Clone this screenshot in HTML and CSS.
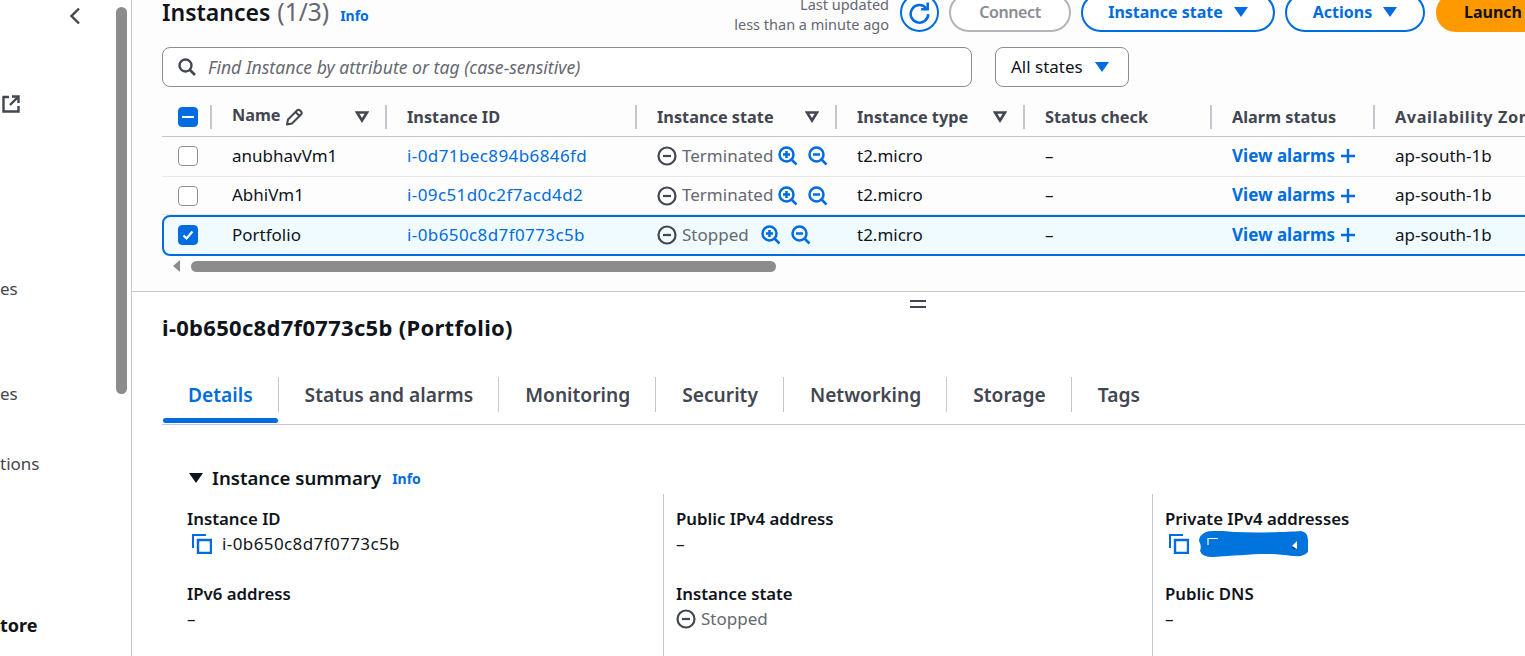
FILE: index.html
```html
<!DOCTYPE html>
<html>
<head>
	<title>Instances | EC2</title>
	<link rel="stylesheet" href="styles.css">
</head>
<body>
	<svg class="defs" width="0" height="0">
		<symbol id="stopped" viewBox="0 0 20 20"><circle cx="10" cy="10" r="8.5" fill="none" stroke="currentColor" stroke-width="2.2"/><path d="M6 10h8" stroke="currentColor" stroke-width="2.2"/></symbol>
		<symbol id="zoomin" viewBox="0 0 20 20"><circle cx="8.5" cy="8.5" r="7" fill="none" stroke="currentColor" stroke-width="2.5"/><path d="M13.5 13.5l5 5M8.5 5v7M5 8.5h7" fill="none" stroke="currentColor" stroke-width="2.5"/></symbol>
		<symbol id="zoomout" viewBox="0 0 20 20"><circle cx="8.5" cy="8.5" r="7" fill="none" stroke="currentColor" stroke-width="2.5"/><path d="M13.5 13.5l5 5M5 8.5h7" fill="none" stroke="currentColor" stroke-width="2.5"/></symbol>
		<symbol id="plus" viewBox="0 0 16 16"><path d="M8 1v14M1 8h14" stroke="currentColor" stroke-width="2.4"/></symbol>
		<symbol id="copy" viewBox="0 0 20 20"><path d="M1 14V1h13" fill="none" stroke="currentColor" stroke-width="2"/><path d="M6 6h13v13H6z" fill="none" stroke="currentColor" stroke-width="2.4"/></symbol>
		<symbol id="sort" viewBox="0 0 14 12"><path d="M2 1.500h10L7 9.500z" fill="none" stroke="currentColor" stroke-width="2.600"/></symbol>
		<symbol id="caret" viewBox="0 0 14 12"><path d="M0 1h14L7 11z" fill="currentColor"/></symbol>
	</svg>

	<aside class="sidenav">
		<div class="nav-inner">
			<svg class="nav-chevron" viewBox="0 0 12 18" width="12" height="18"><path d="M10 1.500L2.500 9l7.500 7.500" fill="none" stroke="#424650" stroke-width="2.400"/></svg>
			<svg class="nav-ext" viewBox="0 0 18 18" width="18" height="18"><path d="M7 2H1.500v14.500h15V11M10 1.500h6.500V8M16 2L8 10" fill="none" stroke="#424650" stroke-width="2.400"/></svg>
			<div class="nav-item nav-a">es</div>
			<div class="nav-item nav-b">es</div>
			<div class="nav-item nav-c">tions</div>
			<div class="nav-item nav-head">tore</div>
		</div>
		<div class="nav-scroll"></div>
	</aside>

	<main class="content">
		<section class="list-panel">
			<div class="list-head">
				<h1 class="title">Instances <span class="count">(1/3)</span> <a class="info">Info</a></h1>
				<div class="updated">Last updated<br>less than a minute ago</div>
				<button class="btn btn-icon"><svg viewBox="0 0 20 20" width="22" height="22"><path d="M15.500 5.500A8 8 0 1 0 17.500 11" fill="none" stroke="#006ce0" stroke-width="2.300"/><path d="M11 6.500h6V.5" fill="none" stroke="#006ce0" stroke-width="2.300"/></svg></button>
				<button class="btn btn-off">Connect</button>
				<button class="btn btn-state">Instance state <svg class="btn-caret"><use href="#caret"/></svg></button>
				<button class="btn btn-actions">Actions <svg class="btn-caret"><use href="#caret"/></svg></button>
				<button class="btn btn-launch">Launch</button>
			</div>

			<div class="filters">
				<div class="search">
					<svg viewBox="0 0 18 18" width="18" height="18"><circle cx="7.500" cy="7.500" r="6" fill="none" stroke="#424650" stroke-width="2.400"/><path d="M12 12l5 5" stroke="#424650" stroke-width="2.600"/></svg>
					<span>Find Instance by attribute or tag (case-sensitive)</span>
				</div>
				<div class="state-select">All states <svg class="btn-caret"><use href="#caret"/></svg></div>
			</div>

			<div class="row row-head">
				<div class="cell cell-check"><span class="check check-on"><i class="dash"></i></span></div>
				<div class="cell name-head"><span class="name-label">Name</span><svg viewBox="0 0 18 18" width="18" height="18"><path d="M2 16.500l1-5L12 2.500q1.500-1.500 3 0l1 1q1.500 1.500 0 3l-9 9z M10.500 4l4 4" fill="none" stroke="#424650" stroke-width="2" stroke-linejoin="round"/></svg><svg class="sort"><use href="#sort"/></svg></div>
				<div class="cell">Instance ID</div>
				<div class="cell">Instance state<svg class="sort"><use href="#sort"/></svg></div>
				<div class="cell">Instance type<svg class="sort"><use href="#sort"/></svg></div>
				<div class="cell">Status check</div>
				<div class="cell">Alarm status</div>
				<div class="cell cell-az">Availability Zone</div>
			</div>
			<div class="row row-first">
				<div class="cell cell-check"><span class="check"></span></div>
				<div class="cell">anubhavVm1</div>
				<div class="cell"><a class="link">i-0d71bec894b6846fd</a></div>
				<div class="cell"><span class="state"><svg><use href="#stopped"/></svg>Terminated</span><svg class="zoom first"><use href="#zoomin"/></svg><svg class="zoom"><use href="#zoomout"/></svg></div>
				<div class="cell">t2.micro</div>
				<div class="cell">–</div>
				<div class="cell"><a class="alarm">View alarms <svg><use href="#plus"/></svg></a></div>
				<div class="cell">ap-south-1b</div>
			</div>
			<div class="row row-second">
				<div class="cell cell-check"><span class="check"></span></div>
				<div class="cell">AbhiVm1</div>
				<div class="cell"><a class="link">i-09c51d0c2f7acd4d2</a></div>
				<div class="cell"><span class="state"><svg><use href="#stopped"/></svg>Terminated</span><svg class="zoom first"><use href="#zoomin"/></svg><svg class="zoom"><use href="#zoomout"/></svg></div>
				<div class="cell">t2.micro</div>
				<div class="cell">–</div>
				<div class="cell"><a class="alarm">View alarms <svg><use href="#plus"/></svg></a></div>
				<div class="cell">ap-south-1b</div>
			</div>
			<div class="row row-selected">
				<div class="cell cell-check"><span class="check check-on"><svg viewBox="0 0 14 14" width="14" height="14"><path d="M2.500 7.500l3 3 6-7" fill="none" stroke="#fff" stroke-width="2.200"/></svg></span></div>
				<div class="cell">Portfolio</div>
				<div class="cell"><a class="link">i-0b650c8d7f0773c5b</a></div>
				<div class="cell"><span class="state"><svg><use href="#stopped"/></svg>Stopped</span><svg class="zoom wide"><use href="#zoomin"/></svg><svg class="zoom"><use href="#zoomout"/></svg></div>
				<div class="cell">t2.micro</div>
				<div class="cell">–</div>
				<div class="cell"><a class="alarm">View alarms <svg><use href="#plus"/></svg></a></div>
				<div class="cell">ap-south-1b</div>
			</div>
			<div class="hscroll">
				<span class="hscroll-arrow"></span>
				<span class="hscroll-thumb"></span>
			</div>
		</section>

		<div class="splitter"><span></span></div>

		<section class="detail-panel">
			<h2 class="detail-title">i-0b650c8d7f0773c5b (Portfolio)</h2>
			<nav class="tabs">
				<a class="tab tab-active">Details</a>
				<a class="tab">Status and alarms</a>
				<a class="tab">Monitoring</a>
				<a class="tab">Security</a>
				<a class="tab">Networking</a>
				<a class="tab">Storage</a>
				<a class="tab tab-last">Tags</a>
			</nav>
			<h3 class="summary"><svg viewBox="0 0 14 12" width="14" height="12"><path d="M0 1h14L7 11z" fill="#0f141a"/></svg>Instance summary <a class="info">Info</a></h3>
			<div class="summary-grid">
				<div class="col">
					<div class="label">Instance ID</div>
					<div class="value"><svg class="copy"><use href="#copy"/></svg><span class="mono-ish">i-0b650c8d7f0773c5b</span></div>
					<div class="label">IPv6 address</div>
					<div class="value">–</div>
				</div>
				<div class="col col-line">
					<div class="label">Public IPv4 address</div>
					<div class="value">–</div>
					<div class="label">Instance state</div>
					<div class="value state"><svg><use href="#stopped"/></svg>Stopped</div>
				</div>
				<div class="col col-line">
					<div class="label">Private IPv4 addresses</div>
					<div class="value"><svg class="copy copy-tight"><use href="#copy"/></svg><svg class="scribble" viewBox="0 0 110 26" width="110" height="26"><path d="M8 1C14-1 28 0 36 1C60 2 90 1 103 0Q110 1 110 9L110 21Q106 26 96 25C85 24 80 23 70 23C50 23 35 25 15 26Q4 26 2 20Q4 15 1 10Q1 4 8 1Z" fill="#0073dc"/><path d="M10 14V7.500h10" fill="none" stroke="#fff" stroke-width="1.200"/><path d="M94 15l5-5v8z" fill="#fff"/><path d="M94 16l3 2" stroke="#0f141a"/></svg></div>
					<div class="label">Public DNS</div>
					<div class="value">–</div>
				</div>
			</div>
		</section>
	</main>
</body>
</html>
```

FILE: styles.css
```css
* {
	box-sizing: border-box;
}

body {
	display: flex;
	margin: 0;
	width: 1525px;
	height: 656px;
	overflow: hidden;
	background-color: #fff;
	color: #0f141a;
	font-family: "Noto Sans", "Open Sans", sans-serif;
	font-size: 17px;
}

.defs {position: absolute;}

a {text-decoration: none;}

svg {flex: none;}

/* side nav, cut off at the left edge */
.sidenav {
	display: flex;
	flex: none;
	width: 132px;
	height: 656px;
	border-right: 1px solid #c6c6cd;
}

.nav-inner {
	flex: none;
	width: 116px;
	padding-top: 7px;
}

.nav-chevron {
	display: block;
	margin-left: 69px;
}

.nav-ext {
	display: block;
	margin: 70px 0 0 2px;
}

.nav-item {
	line-height: 22px;
	color: #424650;
}

.nav-a {margin-top: 165px;}
.nav-b {margin-top: 83px;}
.nav-c {margin-top: 48px;}

.nav-head {
	margin-top: 139px;
	font-size: 18px;
	font-weight: 700;
	color: #0f141a;
}

.nav-scroll {
	flex: none;
	width: 11px;
	height: 387px;
	margin-top: 7px;
	border-radius: 6px;
	background-color: #8c8c8c;
}

.content {
	flex: 1;
	min-width: 0;
}

/* instance list */
.list-panel {
	height: 292px;
	padding-left: 30px;
	overflow: hidden;
	background-color: #fdfdfd;
	border-bottom: 1px solid #c6c6cd;
}

.list-head {
	display: flex;
	align-items: center;
	height: 39px;
	margin-top: -7px;
	white-space: nowrap;
}

.title {
	flex: none;
	width: 555px;
	margin: 0;
	padding-top: 2px;
	font-size: 23px;
	font-weight: 600;
	line-height: 24px;
}

.count {
	margin-left: 1px;
	font-size: 24.5px;
	font-weight: 400;
	color: #656871;
}

.info {
	margin-left: 5px;
	color: #006ce0;
	font-size: 14px;
	font-weight: 700;
}

.updated {
	flex: none;
	width: 172px;
	padding-top: 2px;
	text-align: right;
	color: #656871;
	font-size: 14.5px;
	line-height: 20px;
}

.btn {
	display: flex;
	align-items: center;
	justify-content: center;
	gap: 11px;
	flex: none;
	height: 39px;
	margin-left: 10px;
	padding: 0 0 2px;
	background-color: #fff;
	border: 2px solid #006ce0;
	border-radius: 20px;
	color: #006ce0;
	font-family: inherit;
	font-size: 16px;
	font-weight: 700;
}

.btn-icon {width: 39px; margin-left: 11px; padding: 0;}
.btn-off {width: 122px; border-color: #b4b4bb; color: #8c8c94; font-weight: 600; letter-spacing: -.4px;}
.btn-state {width: 194px;}
.btn-actions {width: 140px;}

.btn-launch {
	justify-content: flex-start;
	width: 160px;
	margin-left: 11px;
	padding-left: 26px;
	background-color: #ff9900;
	border-color: #ff9900;
	color: #0f141a;
}

.btn-caret {
	width: 14px;
	height: 12px;
	color: #006ce0;
}

.filters {
	display: flex;
	gap: 23px;
	margin-top: 15px;
}

.search {
	display: flex;
	align-items: center;
	gap: 12px;
	width: 810px;
	height: 40px;
	padding: 0 0 1px 15px;
	background-color: #fff;
	border: 1px solid #8c8c94;
	border-radius: 8px;
	color: #656871;
	font-size: 17.6px;
	font-style: italic;
}

.state-select {
	display: flex;
	align-items: center;
	gap: 12px;
	width: 134px;
	height: 40px;
	padding: 0 0 1px 15px;
	background-color: #fff;
	border: 1px solid #8c8c94;
	border-radius: 8px;
}

/* table rows share one column template */
.row {
	display: grid;
	grid-template-columns: 50px 175px 250px 200px 188px 187px 163px 200px;
	align-items: center;
	width: 1400px;
	height: 39px;
	border-bottom: 1px solid #e8e8ea;
	white-space: nowrap;
}

.row-first {height: 40px; padding-bottom: 1px;}
.row-second {height: 38px;}

.row-head {
	grid-template-columns: 48px 175px 250px 200px 188px 187px 163px 200px;
	height: 40px;
	margin-top: 10px;
	border-bottom: 1px solid #c6c6cd;
	color: #424650;
	font-size: 16.3px;
	font-weight: 700;
}

.row-head .cell {
	position: relative;
	display: flex;
	align-items: center;
	height: 24px;
	padding-bottom: 0;
}

.row-head .cell + .cell {
	border-left: 2px solid #c6c6cd;
}

.cell {
	display: flex;
	align-items: center;
	padding-left: 20px;
	padding-bottom: 2px;
}

.cell-check {padding-left: 16px; padding-bottom: 0;}

.row-head .cell-check {padding-left: 16px;}

.row-head .cell-az {letter-spacing: .6px;}

.name-label {margin-top: -4px;}

.name-head svg:first-of-type {margin-left: 4px;}

.sort {
	width: 14px;
	height: 12px;
	margin-left: auto;
	margin-right: 16px;
	color: #424650;
}

.check {
	display: flex;
	align-items: center;
	justify-content: center;
	width: 20px;
	height: 20px;
	background-color: #fff;
	border: 1px solid #8c8c94;
	border-radius: 4px;
}

.check-on {
	background-color: #006ce0;
	border-color: #006ce0;
}

.dash {
	display: block;
	width: 12px;
	height: 2px;
	background-color: #fff;
}

.link, .mono-ish {letter-spacing: .4px;}

.link {color: #006ce0;}

.state {
	display: flex;
	align-items: center;
	gap: 5px;
	color: #656871;
}

.state svg {
	width: 20px;
	height: 20px;
	color: #424650;
}

/* icons stay put when the row text is nudged up */
.row .state svg, .alarm svg, .zoom {margin-top: 2px;}

.zoom {
	width: 20px;
	height: 20px;
	margin-left: 10px;
	color: #006ce0;
}

.zoom.first {margin-left: 5px;}
.zoom.wide {margin-left: 12px;}

.alarm {
	display: flex;
	align-items: center;
	gap: 5px;
	color: #006ce0;
	font-weight: 700;
}

.alarm svg {
	width: 16px;
	height: 16px;
}

.row-selected {
	height: 41px;
	padding-bottom: 1px;
	background-color: #f0fbff;
	border: 2px solid #006ce0;
	border-radius: 8px;
	grid-template-columns: 48px 175px 250px 200px 188px 187px 163px 200px;
}

.row-selected .cell-check {padding-left: 14px;}

.hscroll {
	display: flex;
	align-items: center;
	height: 12px;
	margin-top: 4px;
	padding-left: 11px;
}

.hscroll-arrow {
	width: 0;
	height: 0;
	border-style: solid;
	border-width: 6px 7px 6px 0;
	border-color: transparent #8c8c8c transparent transparent;
}

.hscroll-thumb {
	width: 585px;
	height: 11px;
	margin-left: 11px;
	border-radius: 6px;
	background-color: #8c8c8c;
}

/* drag handle between the two panels, sits over the border */
.splitter {
	height: 0;
	position: relative;
}

.splitter span {
	position: absolute;
	top: 8px;
	left: 778px;
	width: 16px;
	height: 8px;
	border-top: 2px solid #424650;
	border-bottom: 2px solid #424650;
}

/* details */
.detail-panel {
	padding-left: 30px;
}

.detail-title {
	margin: 21px 0 0;
	font-size: 22px;
	font-weight: 700;
	line-height: 28px;
	letter-spacing: .3px;
}

.tabs {
	display: flex;
	align-items: flex-start;
	height: 48px;
	margin-top: 36px;
	padding-left: 1px;
	border-bottom: 1px solid #c6c6cd;
	white-space: nowrap;
}

.tab {
	display: flex;
	align-items: center;
	height: 35px;
	padding: 0 25px 0 26px;
	border-right: 1px solid #c6c6cd;
	color: #424650;
	font-size: 19.2px;
	font-weight: 600;
}

.tab-last {border-right: 0;}

.tab-active {
	position: relative;
	padding: 0 25px;
	color: #006ce0;
}

.tab-active::after {
	content: "";
	position: absolute;
	left: 0;
	right: 0;
	bottom: -11px;
	height: 5px;
	border-radius: 3px;
	background-color: #006ce0;
}

.summary {
	display: flex;
	align-items: center;
	margin: 40px 0 0 27px;
	font-size: 18.6px;
	font-weight: 600;
	line-height: 24px;
}

.summary svg {margin-right: 9px;}

.summary .info {margin-left: 11px; margin-top: 2px;}

.summary-grid {
	display: grid;
	grid-template-columns: 501px 489px 300px;
	margin-top: 3px;
}

.col {
	height: 170px;
	padding: 12px 0 0 25px;
}

.col-line {
	padding-left: 12px;
	border-left: 1px solid #c6c6cd;
}

.label {
	font-size: 16.8px;
	font-weight: 600;
	line-height: 25px;
}

.value {
	display: flex;
	align-items: center;
	height: 25px;
	margin-bottom: 25px;
	white-space: nowrap;
}

.value.state {color: #656871;}

.copy {
	width: 20px;
	height: 20px;
	margin: 0 10px 0 5px;
	color: #006ce0;
}

.copy-tight {margin: 0 9px 0 4px;}
```
